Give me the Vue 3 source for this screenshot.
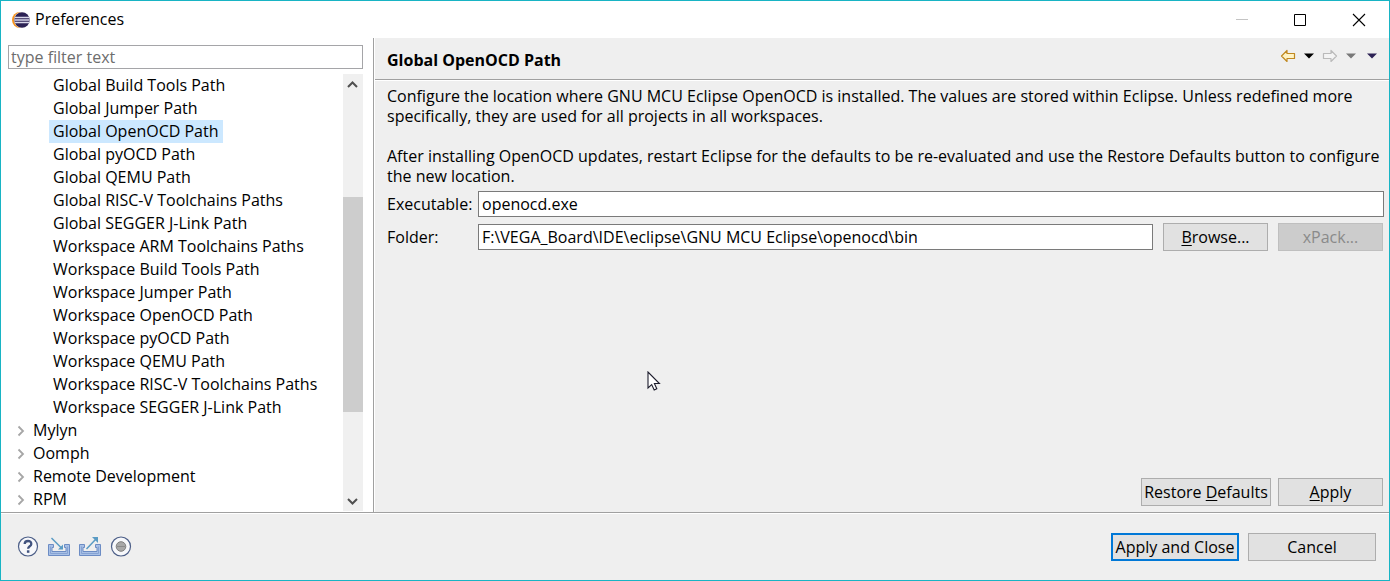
<script setup>
import { ref } from 'vue'

const children = [
  'Global Build Tools Path',
  'Global Jumper Path',
  'Global OpenOCD Path',
  'Global pyOCD Path',
  'Global QEMU Path',
  'Global RISC-V Toolchains Paths',
  'Global SEGGER J-Link Path',
  'Workspace ARM Toolchains Paths',
  'Workspace Build Tools Path',
  'Workspace Jumper Path',
  'Workspace OpenOCD Path',
  'Workspace pyOCD Path',
  'Workspace QEMU Path',
  'Workspace RISC-V Toolchains Paths',
  'Workspace SEGGER J-Link Path',
]
const groups = ['Mylyn', 'Oomph', 'Remote Development', 'RPM']

const selected = ref('Global OpenOCD Path')
const filter = ref('')
const executable = ref('openocd.exe')
const folder = ref('F:\\VEGA_Board\\IDE\\eclipse\\GNU MCU Eclipse\\openocd\\bin')
</script>

<template>
  <div class="window">
    <header class="titlebar">
      <svg class="logo" width="18" height="18" viewBox="0 0 18 18" aria-hidden="true">
        <circle cx="8" cy="9" r="8" fill="#f7941e" />
        <circle cx="10" cy="9" r="8" fill="#fff" />
        <circle cx="10" cy="9" r="7.7" fill="#2c2255" />
        <path d="M3 6.5h14M2.5 9h15M3 11.5h14" stroke="#d9d8ea" stroke-width="1.4" />
      </svg>
      <span class="caption">Preferences</span>
      <button class="sys" aria-label="Minimize" disabled>
        <svg width="14" height="14" viewBox="0 0 14 14"><path d="M1 6.500h12" stroke="#c4c4c4" fill="none" /></svg>
      </button>
      <button class="sys" aria-label="Maximize">
        <svg width="14" height="14" viewBox="0 0 14 14"><path d="M1.500 1.500h11v11h-11z" stroke="#000" fill="none" /></svg>
      </button>
      <button class="sys" aria-label="Close">
        <svg width="14" height="14" viewBox="0 0 14 14"><path d="M1 1l12 12M13 1L1 13" stroke="#000" stroke-width="1.1" fill="none" /></svg>
      </button>
    </header>

    <main class="body">
      <nav class="side">
        <input v-model="filter" class="filter" type="text" placeholder="type filter text" aria-label="type filter text" />
        <div class="tree-box">
          <ul class="tree">
            <li v-for="c in children" :key="c" class="child">
              <button class="node" :class="{ on: c === selected }" @click="selected = c">{{ c }}</button>
            </li>
            <li v-for="g in groups" :key="g" class="group">
              <svg width="8" height="12" viewBox="0 0 8 12" aria-hidden="true">
                <path d="M1.500 1.500L6 6l-4.500 4.500" fill="none" stroke="#a6a6a6" stroke-width="1.8" />
              </svg>
              <button class="node" :class="{ on: g === selected }" @click="selected = g">{{ g }}</button>
            </li>
          </ul>
          <div class="scroll" aria-hidden="true">
            <svg width="20" height="20" viewBox="0 0 20 20">
              <path d="M5 13L9.500 8.500 14 13" fill="none" stroke="#505050" stroke-width="2" />
            </svg>
            <div class="track"><div class="thumb"></div></div>
            <svg width="20" height="20" viewBox="0 0 20 20">
              <path d="M5 8L9.500 12.500 14 8" fill="none" stroke="#505050" stroke-width="2" />
            </svg>
          </div>
        </div>
      </nav>

      <section class="page">
        <div class="heading">
          <h1>Global OpenOCD Path</h1>
          <div class="tools">
            <button class="tool" aria-label="Back">
              <svg width="16" height="14" viewBox="0 0 16 14">
                <path d="M1.500 7L7 1.500V4.500h7.500v5H7v3z" fill="#fff3c4" stroke="#c08820" stroke-width="1.200" stroke-linejoin="round" />
              </svg>
            </button>
            <button class="tool" aria-label="Back history">
              <svg width="10" height="6" viewBox="0 0 10 6"><path d="M0 .5h10L5 5.500z" fill="#000" /></svg>
            </button>
            <button class="tool" aria-label="Forward" disabled>
              <svg width="16" height="14" viewBox="0 0 16 14">
                <path d="M14.500 7L9 1.500V4.500H1.500v5H9v3z" fill="#f4f4f4" stroke="#bababa" stroke-width="1.200" stroke-linejoin="round" />
              </svg>
            </button>
            <button class="tool" aria-label="Forward history" disabled>
              <svg width="10" height="6" viewBox="0 0 10 6"><path d="M0 .5h10L5 5.500z" fill="#787878" /></svg>
            </button>
            <button class="tool menu" aria-label="View menu">
              <svg width="10" height="6" viewBox="0 0 10 6"><path d="M0 .5h10L5 5.500z" fill="#2c2255" /></svg>
            </button>
          </div>
        </div>

        <div class="content">
          <p>Configure the location where GNU MCU Eclipse OpenOCD is installed. The values are stored within Eclipse. Unless redefined more<br />specifically, they are used for all projects in all workspaces.</p>
          <p>After installing OpenOCD updates, restart Eclipse for the defaults to be re-evaluated and use the Restore Defaults button to configure<br />the new location.</p>
          <div class="form">
            <label for="exe">Executable:</label>
            <input id="exe" v-model="executable" class="field" type="text" />
            <label for="folder">Folder:</label>
            <div class="folder-row">
              <input id="folder" v-model="folder" class="field" type="text" />
              <button class="btn side-btn"><u>B</u>rowse...</button>
              <button class="btn side-btn" disabled>xPack...</button>
            </div>
          </div>
          <div class="page-actions">
            <button class="btn restore">Restore <u>D</u>efaults</button>
            <button class="btn side-btn"><u>A</u>pply</button>
          </div>
        </div>
        <svg class="pointer" width="14" height="20" viewBox="0 0 14 20" aria-hidden="true">
          <path d="M1 1v16l3.700-3.400 2.500 5.400 2.600-1.200-2.400-5.300H12.400z" fill="#fff" stroke="#1c1c2c" stroke-width="1.100" />
        </svg>
      </section>
    </main>

    <footer class="footer">
      <button class="round" aria-label="Help">
        <svg width="22" height="22" viewBox="0 0 22 22">
          <circle cx="11" cy="10.500" r="9.500" fill="#f7f8fb" stroke="#4d5f88" stroke-width="1.200" />
          <path d="M7.700 8.100C7.700 4 14.300 4 14.300 7.900C14.300 10.400 11.100 10.200 11.100 12.800" fill="none" stroke="#41537f" stroke-width="2.300" />
          <rect x="9.900" y="14.300" width="2.500" height="2.500" fill="#41537f" />
        </svg>
      </button>
      <button class="round" aria-label="Import">
        <svg width="22" height="22" viewBox="0 0 22 22">
          <path d="M5.500 8.500H.5V19.500H21.500V8.500H16.500V11.500H18V15.500H4V11.500H5.500z" fill="#a9c1e6" stroke="#6c8cc4" />
          <path d="M2.500 10.500V17.500H19.500V10.500" fill="none" stroke="#86a3d4" />
          <path d="M3.500 2L13 11.500" stroke="#5a9bc4" stroke-width="1.500" />
          <path d="M15 13.500V8.500L10 13.500z" fill="#5a9bc4" />
        </svg>
      </button>
      <button class="round" aria-label="Export">
        <svg width="22" height="22" viewBox="0 0 22 22">
          <path d="M5.500 8.500H.5V19.500H21.500V8.500H16.500V11.500H18V15.500H4V11.500H5.500z" fill="#a9c1e6" stroke="#6c8cc4" />
          <path d="M2.500 10.500V17.500H19.500V10.500" fill="none" stroke="#86a3d4" />
          <path d="M7.500 13L17 3" stroke="#5a9bc4" stroke-width="1.500" />
          <path d="M19 1V7L13 1z" fill="#5a9bc4" />
        </svg>
      </button>
      <button class="round" aria-label="Record preferences">
        <svg width="22" height="22" viewBox="0 0 22 22">
          <circle cx="11" cy="10.500" r="9.500" fill="#f7f8fb" stroke="#4d5f88" stroke-width="1.200" />
          <circle cx="11" cy="10.500" r="4.800" fill="#a8a8a8" stroke="#808080" />
          <path d="M7 10.500h8" stroke="#8a8a8a" />
        </svg>
      </button>
      <span class="spring"></span>
      <button class="btn big primary">Apply and Close</button>
      <button class="btn big">Cancel</button>
    </footer>
  </div>
</template>

<style>
body {
  margin: 0;
}
</style>

<style scoped>
.window,
.window * {
  box-sizing: border-box;
}
.window {
  min-height: 100vh;
  display: flex;
  flex-direction: column;
  border: 1px solid #18b4c4;
  background: #efefef;
  color: #000;
  font: 16px/20px "Open Sans", "Noto Sans", sans-serif;
}
button,
input {
  font: inherit;
  color: inherit;
  margin: 0;
}
button {
  padding: 0;
  border: 0;
  background: none;
}
svg {
  display: block;
}
.titlebar {
  display: flex;
  align-items: center;
  height: 37px;
  padding-left: 11px;
  background: #fff;
}
.caption {
  flex: 1;
  padding: 0 0 2px 5px;
}
.sys {
  width: 58px;
  height: 36px;
  display: grid;
  place-items: center;
}
.sys:last-child {
  width: 60px;
}
.body {
  flex: 1;
  display: flex;
  border-bottom: 1px solid #a0a0a0;
}
.side {
  flex: none;
  width: 373px;
  padding: 7px 10px 0 7px;
  background: #fff;
  border-right: 1px solid #a0a0a0;
}
.filter {
  display: block;
  width: 100%;
  height: 24px;
  padding: 0 2px;
  border: 1px solid #a5a5a8;
  border-radius: 0;
  background: #fff;
}
.filter::placeholder {
  color: #6d6d6d;
  opacity: 1;
}
.tree-box {
  display: flex;
  margin-top: 5px;
}
.tree {
  flex: 1;
  margin: 0;
  padding: 0;
  list-style: none;
}
.tree li {
  display: flex;
  align-items: center;
  height: 23px;
}
.child {
  padding-left: 41px;
}
.group {
  padding-left: 9px;
  gap: 4px;
}
.node {
  height: 23px;
  padding: 0 4px 2px;
  white-space: nowrap;
}
.node.on {
  background: #cce8ff;
}
.scroll {
  width: 20px;
  display: flex;
  flex-direction: column;
  background: #f0f0f0;
}
.track {
  flex: 1;
  padding-top: 103px;
}
.thumb {
  height: 215px;
  background: #cdcdcd;
}
.page {
  position: relative;
  flex: 1;
  display: flex;
  flex-direction: column;
  border-left: 1px solid #fff;
}
.heading {
  display: flex;
  justify-content: space-between;
  height: 42px;
  padding: 12px 12px 0;
  border-bottom: 1px solid #a0a0a0;
}
h1 {
  margin: 0;
  font-size: 16px;
  line-height: 20px;
}
.tools {
  display: flex;
  align-items: center;
  height: 12px;
  gap: 8px;
}
.tool.menu {
  margin-left: 3px;
}
.content {
  flex: 1;
  display: flex;
  flex-direction: column;
  padding: 5px 5px 6px 12px;
  border-top: 1px solid #fff;
}
p {
  margin: 0 0 20px;
  white-space: nowrap;
}
p + p {
  margin-bottom: 5px;
}
.form {
  display: grid;
  grid-template-columns: 82px 1fr;
  align-items: center;
  row-gap: 6px;
  column-gap: 9px;
}
label {
  padding-bottom: 1px;
  white-space: nowrap;
}
.field {
  width: 100%;
  height: 26px;
  padding: 0 3px 1px;
  border: 1px solid #7a7a7a;
  border-radius: 0;
  background: #fff;
}
.folder-row {
  display: flex;
  align-items: center;
  gap: 10px;
  padding-right: 1px;
}
.btn {
  height: 28px;
  padding-bottom: 1px;
  border: 1px solid #adadad;
  background: #e1e1e1;
  white-space: nowrap;
}
.btn:disabled {
  border-color: #bfbfbf;
  background: #ccc;
  color: #8a8a8a;
}
.side-btn {
  flex: none;
  width: 105px;
}
u {
  text-underline-offset: 2px;
}
.page-actions {
  display: flex;
  justify-content: flex-end;
  gap: 7px;
  margin-top: auto;
  padding-right: 1px;
}
.restore {
  width: 130px;
}
.pointer {
  position: absolute;
  left: 272px;
  top: 333px;
}
.footer {
  display: flex;
  align-items: center;
  height: 67px;
  padding: 0 13px 0 16px;
  gap: 9px;
  border-top: 1px solid #fff;
}
.spring {
  flex: 1;
}
.big {
  width: 128px;
}
.primary {
  border: 2px solid #0078d7;
}
</style>
